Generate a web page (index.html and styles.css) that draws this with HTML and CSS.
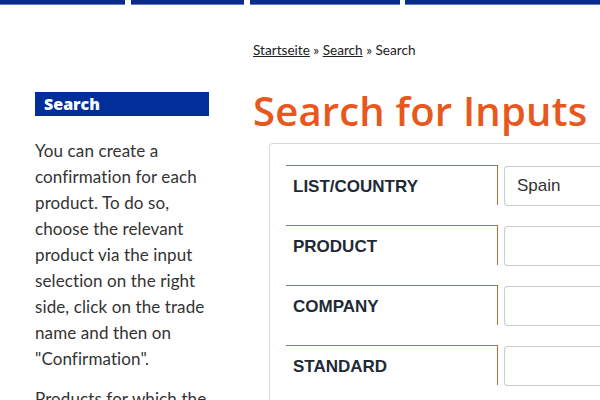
FILE: index.html
```html
<!DOCTYPE html>
<html>
<head>
<meta charset="utf-8">
<link rel="stylesheet" href="styles.css">
</head>
<body>
<nav class="topnav">
  <span class="tab t1"></span>
  <span class="tab t2"></span>
  <span class="tab t3"></span>
  <span class="tab t4"></span>
</nav>
<div class="page">
  <div class="crumbs"><a href="#">Startseite</a> » <a href="#">Search</a> » Search</div>
  <aside class="sidebar">
    <h2 class="side-title">Search</h2>
    <p>You can create a confirmation for each product. To do so, choose the relevant product via the input selection on the right side, click on the trade name and then on "Confirmation".</p>
    <p class="p2">Products for which the confirmation is available are marked.</p>
  </aside>
  <main class="content">
    <h1 class="title">Search for Inputs</h1>
    <div class="card">
      <div class="row"><label class="lbl">LIST/COUNTRY</label><div class="field">Spain</div></div>
      <div class="row"><label class="lbl">PRODUCT</label><div class="field"></div></div>
      <div class="row"><label class="lbl">COMPANY</label><div class="field"></div></div>
      <div class="row"><label class="lbl">STANDARD</label><div class="field"></div></div>
    </div>
  </main>
</div>
</body>
</html>
```
FILE: styles.css
```css
html, body { margin: 0; padding: 0; background: #fff; }
body { font-family: "Lato", "Open Sans", sans-serif; color: #333; height: 400px; overflow: hidden; }

.topnav { display: flex; gap: 6px; height: 5px; }
.tab { display: block; height: 5px; background: #0a2d8c; border-bottom: 1px solid #5f7fc2; box-sizing: border-box; }
.t1 { width: 125px; }
.t2 { width: 113px; }
.t3 { width: 150px; }
.t4 { flex: 1; margin-left: -1px; }

.page {
  display: grid;
  grid-template-columns: 174px 1fr;
  column-gap: 44px;
  padding-left: 35px;
}
.crumbs {
  grid-column: 2;
  margin-top: 37px;
  font-size: 13.6px;
  color: #222;
  line-height: 16px;
  height: 16px;
}
.crumbs a { color: #222; text-decoration: underline; }

.sidebar { grid-column: 1; padding-top: 34px; }
.side-title {
  margin: 0;
  background: #002f99;
  color: #fff;
  font-family: "Open Sans", sans-serif;
  font-size: 16px;
  font-weight: 800;
  line-height: 24px;
  height: 24px;
  padding-left: 9px;
}
.sidebar p {
  margin: 22px 0 0;
  font-size: 17px;
  line-height: 26px;
  color: #333;
  letter-spacing: 0.1px;
}
.sidebar .p2 { margin-top: 14px; }

.content { grid-column: 2; padding-top: 28px; }
.title {
  margin: 0;
  font-family: "Open Sans", sans-serif;
  font-weight: 600;
  font-size: 40px;
  line-height: 50px;
  color: #e8581c;
  letter-spacing: 0.2px;
}
.card {
  margin-top: 7px;
  margin-left: 16px;
  border: 1px solid #d8d8d8;
  border-right: none;
  border-radius: 4px 0 0 0;
  padding: 21px 0 40px 16px;
  display: flex;
  flex-direction: column;
  gap: 20px;
}
.row { display: flex; gap: 6px; height: 40px; }
.lbl {
  width: 212px;
  border-top: 1px solid #c46a3a;
  border-right: 1px solid #c46a3a;
  font-family: "Liberation Sans", Arial, sans-serif;
  font-weight: bold;
  font-size: 17px;
  color: #1e2a36;
  padding: 3px 0 0 7px;
  display: flex;
  align-items: center;
  box-sizing: border-box;
}
.field {
  flex: 1;
  margin-top: 1px;
  height: 40px;
  border: 1px solid #ccc;
  border-right: none;
  border-radius: 4px 0 0 4px;
  box-sizing: border-box;
  font-family: "Liberation Sans", Arial, sans-serif;
  font-size: 17px;
  color: #333;
  padding-left: 12px;
  display: flex;
  align-items: center;
}
```
